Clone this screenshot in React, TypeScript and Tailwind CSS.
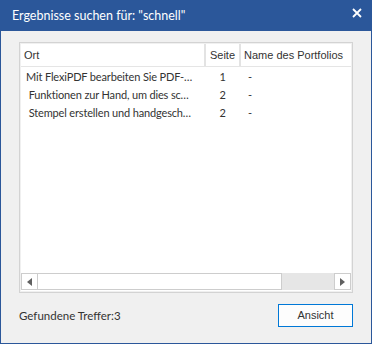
import React from "react";

const rows = [
  { ort: "Mit FlexiPDF bearbeiten Sie PDF-…", seite: "1", name: "-" },
  { ort: "\u00a0Funktionen zur Hand, um dies sc…", seite: "2", name: "-" },
  { ort: "\u00a0Stempel erstellen und handgesch…", seite: "2", name: "-" },
];

const lato = { fontFamily: 'Lato, "Noto Sans", sans-serif' };
const arial = { fontFamily: '"Liberation Sans", Arial, sans-serif' };

export default function App() {
  return (
    <div
      className="w-[372px] h-[344px] flex flex-col bg-[#2b579a] text-[11px] text-[#333333]"
      style={arial}
    >
      <div className="h-[31px] flex items-center justify-between pl-[12px] pr-[10px] text-white text-[12.5px] shrink-0" style={lato}>
        <span className="pt-[2px]">Ergebnisse suchen für: "schnell"</span>
        <svg width="10" height="10" viewBox="0 0 10 10" className="mb-[5px]">
          <path d="M1 1 L9 9 M9 1 L1 9" stroke="white" strokeWidth="1.8" />
        </svg>
      </div>
      <div className="flex-1 mx-[1px] mb-[1px] bg-[#f0f0f0] flex flex-col pl-[18px] pr-[18px] pt-[11px]">
        <div className="h-[251px] border border-[#d3d3d3] p-[1px] bg-[#f0f0f0] flex flex-col">
          <div className="flex-1 bg-white flex flex-col overflow-hidden">
            <div className="flex h-[23px] border-b border-[#e5e5e5] shrink-0">
              <div className="w-[185px] border-r-2 border-[#e3e3e3] flex items-center pl-[3px]">Ort</div>
              <div className="w-[35px] border-r-2 border-[#e3e3e3] flex items-center justify-center">Seite</div>
              <div className="flex-1 flex items-center pl-[3px] whitespace-nowrap">Name des Portfolios</div>
            </div>
            <div className="flex-1 pt-[1px] text-[11px] tracking-[-0.15px]" style={lato}>
              {rows.map((r, i) => (
                <div key={i} className="flex h-[18px] items-center">
                  <div className="w-[185px] pl-[5px] whitespace-nowrap overflow-hidden">{r.ort}</div>
                  <div className="w-[35px] text-center pr-[2px]">{r.seite}</div>
                  <div className="flex-1 pl-[7px]">{r.name}</div>
                </div>
              ))}
            </div>
            <div className="h-[17px] flex shrink-0 bg-[#e6e6e6] mb-[1px]">
              <div className="w-[17px] bg-white border border-[#cdcdcd] flex items-center justify-center">
                <svg width="5" height="8" viewBox="0 0 5 8">
                  <path d="M5 0 L0 4 L5 8 Z" fill="#606060" />
                </svg>
              </div>
              <div className="w-[244px] bg-white border border-[#cdcdcd] border-l-0"></div>
              <div className="flex-1"></div>
              <div className="w-[17px] bg-white border border-[#cdcdcd] flex items-center justify-center">
                <svg width="5" height="8" viewBox="0 0 5 8">
                  <path d="M0 0 L5 4 L0 8 Z" fill="#606060" />
                </svg>
              </div>
            </div>
          </div>
        </div>
        <div className="flex items-center justify-between mt-[11px]">
          <span className="text-[11.5px]" style={lato}>Gefundene Treffer:3</span>
          <button className="w-[75px] h-[23px] border border-[#0078d7] bg-[#fdfdfd] flex items-center justify-center text-[11px] text-[#333333]">
            Ansicht
          </button>
        </div>
      </div>
    </div>
  );
}
